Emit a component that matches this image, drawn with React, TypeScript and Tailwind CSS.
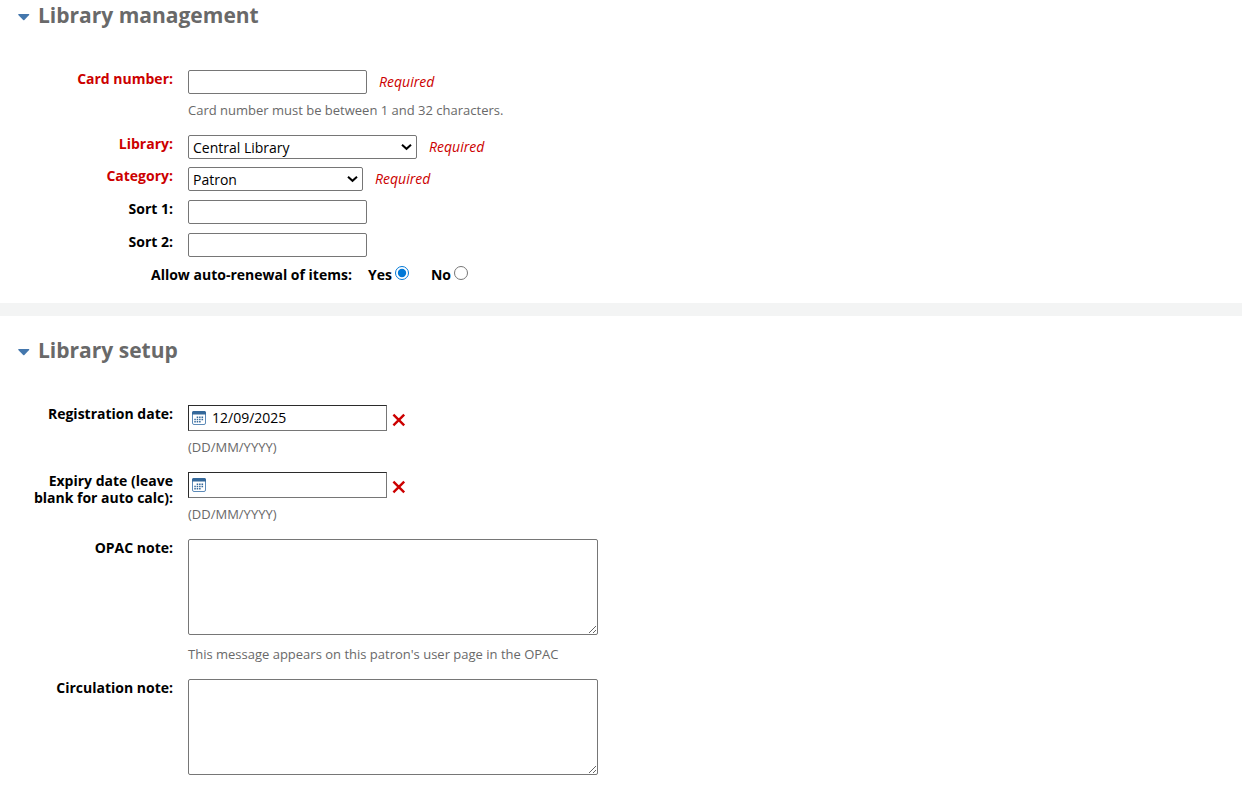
import { useState, type ReactNode } from "react";

function Section({ title, className, children }: { title: string; className: string; children: ReactNode }) {
  const [open, setOpen] = useState(true);
  return (
    <section className={className}>
      <h2>
        <button
          type="button"
          aria-expanded={open}
          onClick={() => setOpen(!open)}
          className="flex items-center gap-2 pl-[18px] text-[21px] leading-6 font-bold text-[#696969]"
        >
          <svg aria-hidden="true" width="12" height="8" viewBox="0 0 12 8" className={open ? "mt-[3px]" : "mt-[3px] -rotate-90"}>
            <path d="M.6 1h10.400q.6.3.1.9L6.400 6.900q-.6.5-1.200 0L.3 1.900Q0 1.300.6 1Z" fill="#4477ad" />
          </svg>
          {title}
        </button>
      </h2>
      {open && <div className="mt-[43px] flex flex-col gap-2">{children}</div>}
    </section>
  );
}

function Row({ id, label, required, className = "", children }: { id: string; label: string; required?: boolean; className?: string; children: ReactNode }) {
  return (
    <div className={`flex ${className}`}>
      <label
        htmlFor={id}
        className={`mr-[15px] ml-4 w-[157px] shrink-0 text-right leading-[17px] font-bold ${required ? "text-[#cc0000]" : "text-black"}`}
      >
        {label}
      </label>
      <div>{children}</div>
    </div>
  );
}

function Required() {
  return <span className="ml-3 text-[#cc0000] italic">Required</span>;
}

function Hint({ children }: { children: ReactNode }) {
  return <p className="mt-2 pb-2 text-[13px] leading-[17px] text-[#696969]">{children}</p>;
}

const box = "h-6 w-[179px] rounded-xs border border-[#767676] bg-white px-1";

function Select({ id, option, className }: { id: string; option: string; className: string }) {
  return (
    <div className="flex items-center">
      <div className={`grid items-center ${className}`}>
        <select
          id={id}
          className="col-start-1 row-start-1 h-6 w-full appearance-none rounded-xs border border-[#767676] bg-white pt-px pr-5 pl-1 leading-5 text-black"
        >
          <option>{option}</option>
        </select>
        <svg
          aria-hidden="true"
          width="12"
          height="8"
          viewBox="0 0 12 8"
          className="pointer-events-none col-start-1 row-start-1 mr-1 justify-self-end"
        >
          <path d="m1 1.800 4.500 4 4.500-4" fill="none" stroke="#000" strokeWidth="2" />
        </svg>
      </div>
      <Required />
    </div>
  );
}

function CalendarIcon() {
  return (
    <svg
      aria-hidden="true"
      width="14"
      height="14"
      viewBox="0 0 14 14"
      className="pointer-events-none col-start-1 row-start-1 ml-1"
    >
      <rect x=".5" y=".5" width="13" height="13" rx="1.500" fill="#fff" stroke="#5c8ab8" />
      <path d="M0 3.500v-2Q0 0 1.500 0h11Q14 0 14 1.500v2Z" fill="#34689a" />
      <g stroke="#34689a" strokeWidth="1.400" strokeDasharray="1.500 .9">
        <path d="M4.700 6.200H12" />
        <path d="M2.300 8.500H12" />
        <path d="M2.300 10.800h6.700" />
      </g>
    </svg>
  );
}

function DateField({ id, initial }: { id: string; initial: string }) {
  const [value, setValue] = useState(initial);
  return (
    <>
      <div className="flex items-center">
        <div className="grid items-center">
          <input
            id={id}
            type="text"
            value={value}
            onChange={(e) => setValue(e.target.value)}
            className="col-start-1 row-start-1 h-[26px] w-[199px] border border-t-[#2b2b2b] border-r-[#767676] border-b-[#767676] border-l-[#2b2b2b] bg-white pb-px pl-[23px] text-black"
          />
          <CalendarIcon />
        </div>
        <button type="button" aria-label="Clear date" onClick={() => setValue("")} className="mt-1 ml-[5px]">
          <svg aria-hidden="true" width="14" height="14" viewBox="0 0 14 14">
            <path d="m1.400 1.600 10.800 10.800M12.200 1.600 1.400 12.400" stroke="#cc0000" strokeWidth="2.400" />
          </svg>
        </button>
      </div>
      <Hint>(DD/MM/YYYY)</Hint>
    </>
  );
}

const area = "block h-24 w-[410px] resize rounded-xs border border-[#767676] bg-white p-1";

export default function App() {
  return (
    <main className="bg-white pb-3 font-['Open_Sans','Noto_Sans',sans-serif] text-[14px] leading-5 text-black">
      <Section title="Library management" className="pt-[3px] pb-[19px]">
        <Row id="card" label="Card number:" required>
          <div className="flex items-center">
            <input id="card" type="text" className={box} />
            <Required />
          </div>
          <Hint>Card number must be between 1 and 32 characters.</Hint>
        </Row>
        <Row id="library" label="Library:" required>
          <Select id="library" option="Central Library" className="w-[229px]" />
        </Row>
        <Row id="category" label="Category:" required>
          <Select id="category" option="Patron" className="w-[175px]" />
        </Row>
        <Row id="sort1" label="Sort 1:" className="pt-px">
          <input id="sort1" type="text" className={`block ${box}`} />
        </Row>
        <Row id="sort2" label="Sort 2:" className="pt-px">
          <input id="sort2" type="text" className={`block ${box}`} />
        </Row>
        <div role="radiogroup" aria-labelledby="renewal" className="flex pt-px pl-[151px] leading-[18px] font-bold">
          <span id="renewal" className="mr-4">Allow auto-renewal of items:</span>
          <label className="mr-[22px] flex gap-[3px]">
            Yes
            <input type="radio" name="renewal" defaultChecked className="size-[14px] accent-[#0078d7]" />
          </label>
          <label className="flex gap-[3px]">
            No
            <input type="radio" name="renewal" className="size-[14px] accent-[#0078d7]" />
          </label>
        </div>
      </Section>
      <div className="h-[13px] bg-[#f3f4f4]" />
      <Section title="Library setup" className="pt-[22px]">
        <Row id="registration" label="Registration date:">
          <DateField id="registration" initial="12/09/2025" />
        </Row>
        <Row id="expiry" label="Expiry date (leave blank for auto calc):">
          <DateField id="expiry" initial="" />
        </Row>
        <Row id="opac" label="OPAC note:">
          <textarea id="opac" className={`mb-[11px] ${area}`} />
          <Hint>This message appears on this patron's user page in the OPAC</Hint>
        </Row>
        <Row id="circulation" label="Circulation note:">
          <textarea id="circulation" className={area} />
        </Row>
      </Section>
    </main>
  );
}
